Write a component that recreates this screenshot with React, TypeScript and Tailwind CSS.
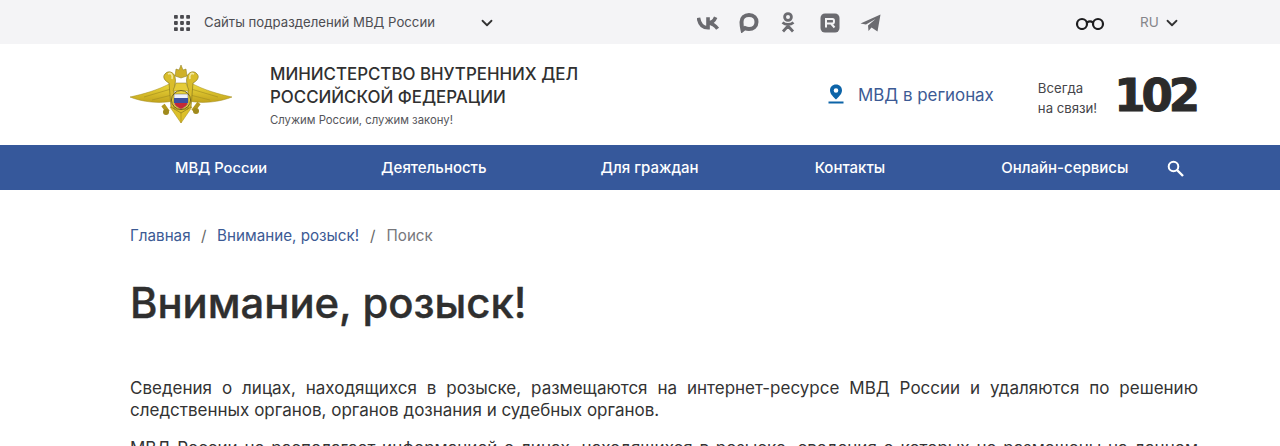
import React from "react";
import { ChevronDown } from "lucide-react";

const Emblem = () => (
  <svg width="102" height="59" viewBox="0 0 102 59">
    <defs>
      <linearGradient id="g" x1="0" y1="0" x2="0" y2="1">
        <stop offset="0" stopColor="#efdb3c" />
        <stop offset="1" stopColor="#c2a31c" />
      </linearGradient>
    </defs>
    <path d="M0 32 C14 29 28 25 41 18 L43 36 C30 39 12 37 0 32Z" fill="url(#g)" stroke="#a08a1c" strokeWidth=".5" />
    <path d="M102 32 C88 29 74 25 61 18 L59 36 C72 39 90 37 102 32Z" fill="url(#g)" stroke="#a08a1c" strokeWidth=".5" />
    <path d="M14 32 L41 24 M22 35 L42 30 M88 32 L61 24 M80 35 L60 30" stroke="#a8921f" strokeWidth=".7" />
    <path d="M51 58 L40 42 L62 42Z" fill="#dcc02a" stroke="#a08a1c" strokeWidth=".5" />
    <path d="M51 58 V44" stroke="#b0961f" strokeWidth=".8" />
    <path d="M33 40 L38 47 M69 38 L63 46" stroke="#b3981f" strokeWidth="4" />
    <circle cx="36" cy="47" r="3" fill="#a08a1c" />
    <circle cx="66" cy="46" r="3" fill="#a08a1c" />
    <path d="M39 18 C35 16 32 12 35 9 C38 5 44 7 45 12 C46 16 45 20 44 24 L44 44 L58 44 L58 24 C57 20 56 16 57 12 C58 7 64 5 67 9 C70 12 67 16 63 18 L61 42 L51 48 L41 42Z" fill="#d9bd2a" stroke="#8a7a1e" strokeWidth=".7" />
    <path d="M38 9 C41 7 43 10 42 14 M64 9 C61 7 59 10 60 14" fill="none" stroke="#f2e8a0" strokeWidth="1.6" />
    <path d="M45 11 L46 4 L49 5 L51 0 L53 5 L56 4 L57 11 L51 13Z" fill="#cfb128" stroke="#8a7a1e" strokeWidth=".5" />
    <path d="M46 18 L56 18 L59 26 L43 26Z" fill="#e5cc38" stroke="#8a7a1e" strokeWidth=".5" />
    <circle cx="51" cy="35" r="9.5" fill="#ead33a" stroke="#6f6320" />
    <path d="M44 29 H58 V37 C58 41 54 42 51 44 C48 42 44 41 44 37Z" fill="#eef0f8" stroke="#333" strokeWidth=".4" />
    <path d="M44 33 H58 V38 H44Z" fill="#3b4fa0" />
    <path d="M44.5 38 H57.5 C57 41 54 42 51 44 C48 42 45 41 44.5 38Z" fill="#c32a37" />
  </svg>
);

const Dots = () => (
  <svg width="16" height="16" viewBox="0 0 16 16" fill="#4a4a4f">
    {[1.9, 8, 14.1].flatMap((y) =>
      [1.9, 8, 14.1].map((x) => <rect key={`${x}-${y}`} x={x - 1.9} y={y - 1.9} width="3.8" height="3.8" rx=".8" />)
    )}
  </svg>
);

const Vk = () => (
  <svg width="23" height="16" viewBox="0 0 24 16" fill="none" stroke="#6b6b70" strokeWidth="3.8">
    <path d="M1.5 2.5 C2.5 9 6 13 11.5 13 V2" />
    <path d="M11.5 8 C15 8 18 5.5 19.5 2 M11.5 8 C15.5 8.5 19 10.5 21.5 14" />
  </svg>
);
const Max = () => (
  <svg width="20" height="21" viewBox="0 0 20 21" fill="none">
    <path d="M10 3 C15 3 17.5 6.5 17.5 10 C17.5 14.5 14 17 10 17 C8 17 7 16.5 6 16 L3.5 18 C2.8 15 2.5 13 2.5 10 C2.5 6 5.5 3 10 3Z" stroke="#6b6b70" strokeWidth="4" />
  </svg>
);
const Ok = () => (
  <svg width="14" height="21" viewBox="0 0 14 21" fill="none" stroke="#6b6b70" strokeWidth="2.8">
    <circle cx="7" cy="5" r="3.4" />
    <path d="M1.5 10.5 C4.5 13 9.5 13 12.5 10.5 M7 12.5 V14 M7 14 L2 19.5 M7 14 L12 19.5" />
  </svg>
);
const Rt = () => (
  <svg width="20" height="20" viewBox="0 0 20 20">
    <rect x="0.5" y="0.5" width="19" height="19" rx="4.5" fill="#6b6b70" />
    <path d="M6 14.5 V6 H12.5 C14.5 6 14.5 10.5 12.5 10.5 H6 M11 10.5 L14.5 14.5" fill="none" stroke="#f4f4f6" strokeWidth="2" />
  </svg>
);
const Tg = () => (
  <svg width="21" height="18" viewBox="0 0 21 18" fill="#6b6b70">
    <path d="M0.5 9.5 L20.5 0.5 L17.5 17.5 L11.5 13.5 L8.5 17 L8 11.5 L15.5 5 L6 10.5 Z" />
  </svg>
);
const Glasses = () => (
  <svg width="30" height="14" viewBox="0 0 30 14" fill="none" stroke="#1d1d1f" strokeWidth="2.2">
    <circle cx="7" cy="8" r="5" />
    <circle cx="23" cy="8" r="5" />
    <path d="M12 6.5 C14 5 16 5 18 6.5" />
  </svg>
);
const Pin = () => (
  <svg width="16" height="20" viewBox="0 0 16 20">
    <path d="M8 0.5 C4.4 0.5 2 3.1 2 6.4 C2 10 6 13.3 8 15.5 C10 13.3 14 10 14 6.4 C14 3.1 11.6 0.5 8 0.5Z M8 4.2 A2.3 2.3 0 1 1 8 8.8 A2.3 2.3 0 1 1 8 4.2Z" fill="#0d64a8" fillRule="evenodd" />
    <rect x="0.5" y="17.5" width="15" height="2" fill="#0d64a8" />
  </svg>
);
const SearchIcon = () => (
  <svg width="17" height="17" viewBox="0 0 17 17" fill="none" stroke="#fff" className="ml-[39px]">
    <circle cx="6.5" cy="6.5" r="4.8" strokeWidth="2" />
    <path d="M10 10 L16 16" strokeWidth="2.4" />
  </svg>
);

export default function App() {
  return (
    <div className="h-[446px] overflow-hidden bg-white font-['Inter','Noto_Sans',sans-serif] text-[#2f2f2f]">
      <div className="flex h-[44px] items-center bg-[#f4f4f6] pl-[174px] pt-[1px]">
        <Dots />
        <span className="ml-[14px] w-[274px] text-[13.2px] text-[#4d4d52]">Сайты подразделений МВД России</span>
        <ChevronDown size={18} strokeWidth={2.4} className="text-[#333]" />
        <div className="ml-[201px] flex items-center">
          <Vk />
          <div className="ml-[19px]"><Max /></div>
          <div className="ml-[22px]"><Ok /></div>
          <div className="ml-[25px]"><Rt /></div>
          <div className="ml-[20px]"><Tg /></div>
        </div>
        <div className="ml-[194px]"><Glasses /></div>
        <span className="ml-[35px] text-[13.5px] text-[#85858a]">RU</span>
        <ChevronDown size={18} strokeWidth={2.4} className="ml-[4px] text-[#333]" />
      </div>

      <header className="flex h-[101px] items-center pl-[130px]">
        <Emblem />
        <div className="ml-[38px] w-[400px]">
          <div className="text-[16.9px] font-medium leading-[23px] text-[#303030]">МИНИСТЕРСТВО ВНУТРЕННИХ ДЕЛ<br />РОССИЙСКОЙ ФЕДЕРАЦИИ</div>
          <div className="mt-[4px] text-[11.3px] leading-[14px] text-[#55555a]">Служим России, служим закону!</div>
        </div>
        <div className="ml-[158px] flex items-center">
          <Pin />
          <span className="ml-[14px] pt-[2px] text-[16.9px] text-[#3c5a94]">МВД в регионах</span>
        </div>
        <div className="ml-[44px] pt-[6px] text-[13.2px] leading-[20px] text-[#45454a]">Всегда<br />на связи!</div>
        <div className="ml-[17px] pt-[2px] font-['DejaVu_Sans',sans-serif] text-[45px] font-bold leading-none tracking-[-4px] text-[#2b2b2b] [-webkit-text-stroke:1px_#2b2b2b]">102</div>
      </header>

      <nav className="flex h-[45px] items-center bg-[#36589b] pl-[175px] pt-[1px] text-[15px] font-medium text-white">
        <span className="text-[14.7px]">МВД России</span>
        <span className="ml-[114px]">Деятельность</span>
        <span className="ml-[114px]">Для граждан</span>
        <span className="ml-[116px]">Контакты</span>
        <span className="ml-[116px]">Онлайн-сервисы</span>
        <SearchIcon />
      </nav>

      <main className="pl-[130px] pr-[82px]">
        <div className="flex items-center pt-[36px] text-[15.2px] leading-[20px]">
          <span className="text-[#3c5a94]">Главная</span>
          <span className="mx-[10.5px] text-[#666]">/</span>
          <span className="text-[#3c5a94]">Внимание, розыск!</span>
          <span className="mx-[11px] text-[#666]">/</span>
          <span className="text-[#77777c]">Поиск</span>
        </div>
        <h1 className="mt-[32px] text-[41.8px] font-medium leading-[50px] text-[#2f2f2f] [-webkit-text-stroke:0.4px_#2f2f2f]">Внимание, розыск!</h1>
        <p className="mt-[49px] text-justify text-[17px] leading-[22px] text-[#333]">
          Сведения о лицах, находящихся в розыске, размещаются на интернет-ресурсе МВД России и удаляются по решению следственных органов, органов дознания и судебных органов.
        </p>
        <p className="mt-[16px] text-justify text-[17px] leading-[22px] text-[#333]">
          МВД России не располагает информацией о лицах, находящихся в розыске, сведения о которых не размещены на данном интернет-ресурсе и по иным вопросам.
        </p>
      </main>
    </div>
  );
}
